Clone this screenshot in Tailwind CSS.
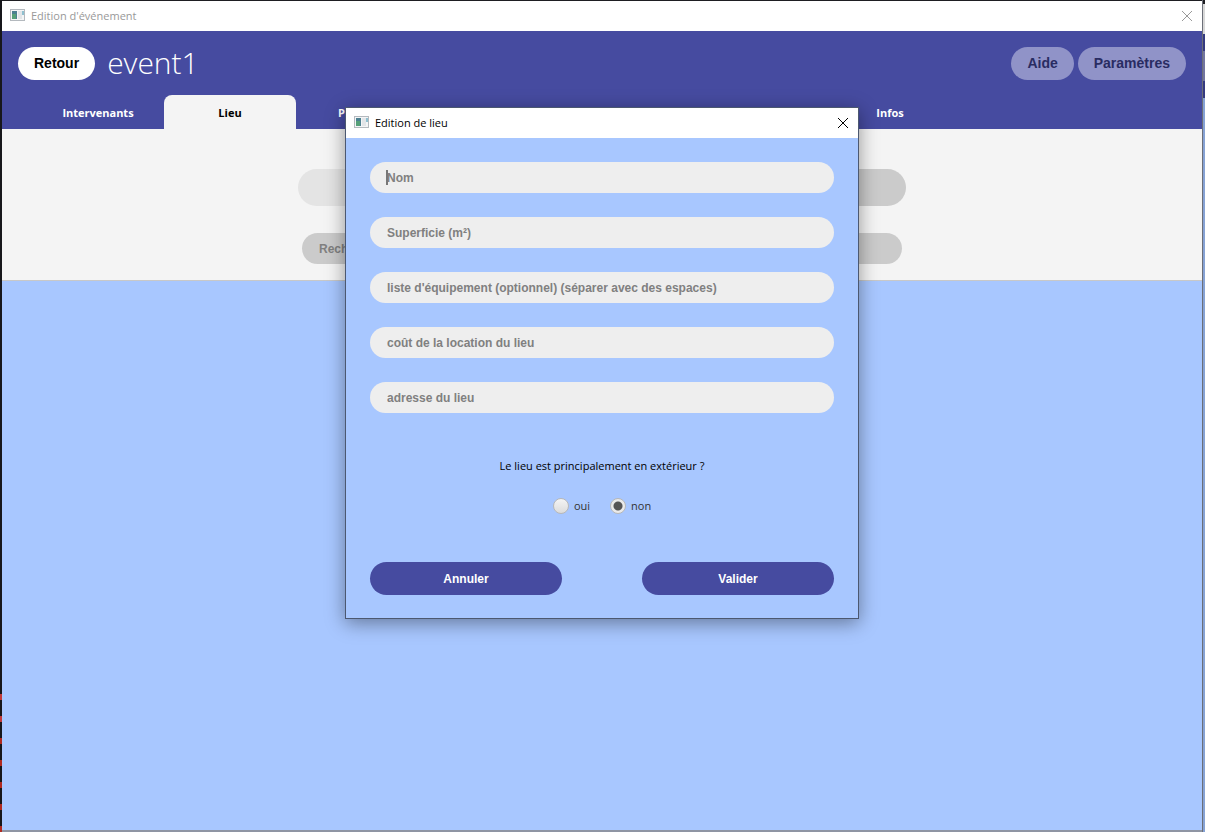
<!DOCTYPE html>
<html lang="fr">
<head>
    <meta charset="UTF-8">
    <meta name="viewport" content="width=device-width, initial-scale=1.0">
    <title>Edition d'événement</title>
    <script src="https://cdn.jsdelivr.net/npm/@tailwindcss/browser@4"></script>
</head>
<body class="flex min-h-screen bg-[#1e1e22] font-['Open_Sans','Noto_Sans',sans-serif] text-[11px] text-black">

<!-- Editor behind the window, left edge -->
<div class="flex w-[2px] flex-col justify-end gap-4 bg-[#17171b]">
    <div class="h-1.5 bg-[#c23a3a]"></div>
    <div class="h-1.5 bg-[#c23a3a]"></div>
    <div class="h-1.5 bg-[#b02a20]"></div>
    <div class="h-1.5 bg-[#b02a20]"></div>
    <div class="h-1.5 bg-[#b02a20]"></div>
    <div class="h-1.5 bg-[#b02a20]"></div>
    <div class="h-1.5 bg-[#b02a20]"></div>
</div>

<!-- Event window -->
<div class="relative mt-px flex flex-1 flex-col border-b-2 border-[#8f95a3] bg-[#a8c7ff]">

    <!-- Title bar -->
    <div class="flex h-[30px] items-center bg-white px-2 text-[#999]">
        <svg class="mr-[5px] h-4 w-4" viewBox="0 0 16 16">
            <rect x="0.5" y="1.5" width="14" height="11" fill="#f4f5f6" stroke="#b4b9be"/>
            <rect x="2" y="3" width="5" height="8" fill="#4b8090"/>
            <rect x="2" y="6" width="4" height="5" fill="#56a079"/>
            <rect x="8" y="3" width="4" height="8" fill="#e2e5e8"/>
            <rect x="12" y="3" width="2" height="4" fill="#8fc0d0"/>
        </svg>
        <span class="flex-1">Edition d'événement</span>
        <button type="button" aria-label="Fermer" class="mr-[2px]">
            <svg class="h-[10px] w-[10px]" viewBox="0 0 10 10" stroke="currentColor"><path d="M0 0L10 10M10 0L0 10"/></svg>
        </button>
    </div>

    <!-- Header -->
    <header class="bg-[#464ba0]">
        <div class="flex h-16 items-center gap-1 px-4 font-['Liberation_Sans',Arial,sans-serif] text-sm font-bold">
            <button type="button" class="mr-2 h-[33px] rounded-full bg-white px-4">Retour</button>
            <h1 class="flex-1 font-['Open_Sans',sans-serif] text-[30px] leading-8 font-light text-white">event1</h1>
            <button type="button" class="h-[33px] rounded-full bg-[#9093c8] px-4 text-[#292c62]">Aide</button>
            <button type="button" class="h-[33px] rounded-full bg-[#9093c8] px-4 text-[#292c62]">Paramètres</button>
        </div>
        <nav class="mx-[30px] grid max-w-[924px] grid-cols-7 text-[11px] font-bold text-white">
            <button type="button" class="h-[34px] pt-[2px]">Intervenants</button>
            <button type="button" class="h-[34px] rounded-t-lg bg-[#f4f4f4] pt-[2px] text-black">Lieu</button>
            <button type="button" class="h-[34px] pt-[2px]">Planning</button>
            <button type="button" class="col-start-7 h-[34px] pt-[2px]">Infos</button>
        </nav>
    </header>

    <!-- Filters -->
    <section class="flex flex-col items-center gap-[27px] border-b border-[#c8c8c8] bg-[#f4f4f4] pt-10 pb-4 font-['Liberation_Sans',Arial,sans-serif] text-xs font-bold">
        <div class="grid h-[37px] w-full max-w-[608px] grid-cols-2 overflow-hidden rounded-full">
            <div class="bg-[#e4e4e4]"></div>
            <div class="bg-[#cbcbcb]"></div>
        </div>
        <input type="text" aria-label="Rechercher" placeholder="Rechercher" class="h-[31px] w-full max-w-[600px] rounded-full bg-[#cbcbcb] px-[17px] placeholder:text-[#808080]">
    </section>

    <!-- Place dialog -->
    <div class="absolute inset-x-0 top-[106px] flex justify-center">
        <form role="dialog" aria-labelledby="dialog-title" class="w-full max-w-[514px] border border-[#4c5870] bg-[#a8c7ff] shadow-[0_4px_18px_rgba(0,0,0,0.4)]">
            <div class="flex h-[30px] items-center bg-white px-2">
                <svg class="mr-[5px] h-4 w-4" viewBox="0 0 16 16">
                    <rect x="0.5" y="1.5" width="14" height="11" fill="#f4f5f6" stroke="#b4b9be"/>
                    <rect x="2" y="3" width="5" height="8" fill="#4b8090"/>
                    <rect x="2" y="6" width="4" height="5" fill="#56a079"/>
                    <rect x="8" y="3" width="4" height="8" fill="#e2e5e8"/>
                    <rect x="12" y="3" width="2" height="4" fill="#8fc0d0"/>
                </svg>
                <h2 id="dialog-title" class="flex-1">Edition de lieu</h2>
                <button type="button" aria-label="Fermer" class="mr-[2px]">
                    <svg class="h-[10px] w-[10px]" viewBox="0 0 10 10" stroke="currentColor"><path d="M0 0L10 10M10 0L0 10"/></svg>
                </button>
            </div>

            <div class="p-6 pb-[23px]">
                <div class="flex flex-col gap-6 font-['Liberation_Sans',Arial,sans-serif] text-xs font-bold">
                    <div class="relative flex">
                        <input type="text" aria-label="Nom" placeholder="Nom" class="h-[31px] w-full rounded-full bg-[#eee] px-[17px] placeholder:text-[#808080]">
                        <!-- Caret -->
                        <span class="absolute top-2 left-4 h-[15px] w-[2px] bg-[#777]"></span>
                    </div>
                    <input type="text" aria-label="Superficie" placeholder="Superficie (m²)" class="h-[31px] w-full rounded-full bg-[#eee] px-[17px] placeholder:text-[#808080]">
                    <input type="text" aria-label="Equipement" placeholder="liste d'équipement (optionnel) (séparer avec des espaces)" class="h-[31px] w-full rounded-full bg-[#eee] px-[17px] placeholder:text-[#808080]">
                    <input type="text" aria-label="Coût" placeholder="coût de la location du lieu" class="h-[31px] w-full rounded-full bg-[#eee] px-[17px] placeholder:text-[#808080]">
                    <input type="text" aria-label="Adresse" placeholder="adresse du lieu" class="h-[31px] w-full rounded-full bg-[#eee] px-[17px] placeholder:text-[#808080]">
                </div>

                <fieldset class="mt-[45px]">
                    <legend class="mx-auto leading-4">Le lieu est principalement en extérieur ?</legend>
                    <div class="mt-6 flex justify-center gap-5 leading-4 text-[#333]">
                        <label class="flex items-center gap-[5px]">
                            <input type="radio" name="exterieur" class="h-4 w-4 appearance-none rounded-full border border-[#b8b8b8] bg-linear-to-b from-[#f4f4f4] to-[#dcdcdc]">
                            oui
                        </label>
                        <label class="flex items-center gap-[5px]">
                            <input type="radio" name="exterieur" checked class="h-4 w-4 appearance-none rounded-full border border-[#b8b8b8] bg-linear-to-b from-[#f4f4f4] to-[#dcdcdc] checked:bg-[radial-gradient(circle,#555_4px,#eaeaea_5px)]">
                            non
                        </label>
                    </div>
                </fieldset>

                <div class="mt-12 flex justify-between font-['Liberation_Sans',Arial,sans-serif] text-xs font-bold text-white">
                    <button type="button" class="h-[33px] w-48 rounded-full bg-[#464ba0]">Annuler</button>
                    <button type="submit" class="h-[33px] w-48 rounded-full bg-[#464ba0]">Valider</button>
                </div>
            </div>
        </form>
    </div>
</div>

<!-- Main window behind, right edge -->
<div class="flex w-[3px] flex-col border-l border-[#6c6f78]">
    <div class="mt-1 h-[30px] bg-[#d8d8d8]"></div>
    <div class="h-[17px] bg-[#353a80]"></div>
    <div class="h-[30px] bg-[#72759f]"></div>
    <div class="h-[17px] bg-[#353a80]"></div>
    <div class="flex-1 bg-[#86a2d4]"></div>
</div>

</body>
</html>
